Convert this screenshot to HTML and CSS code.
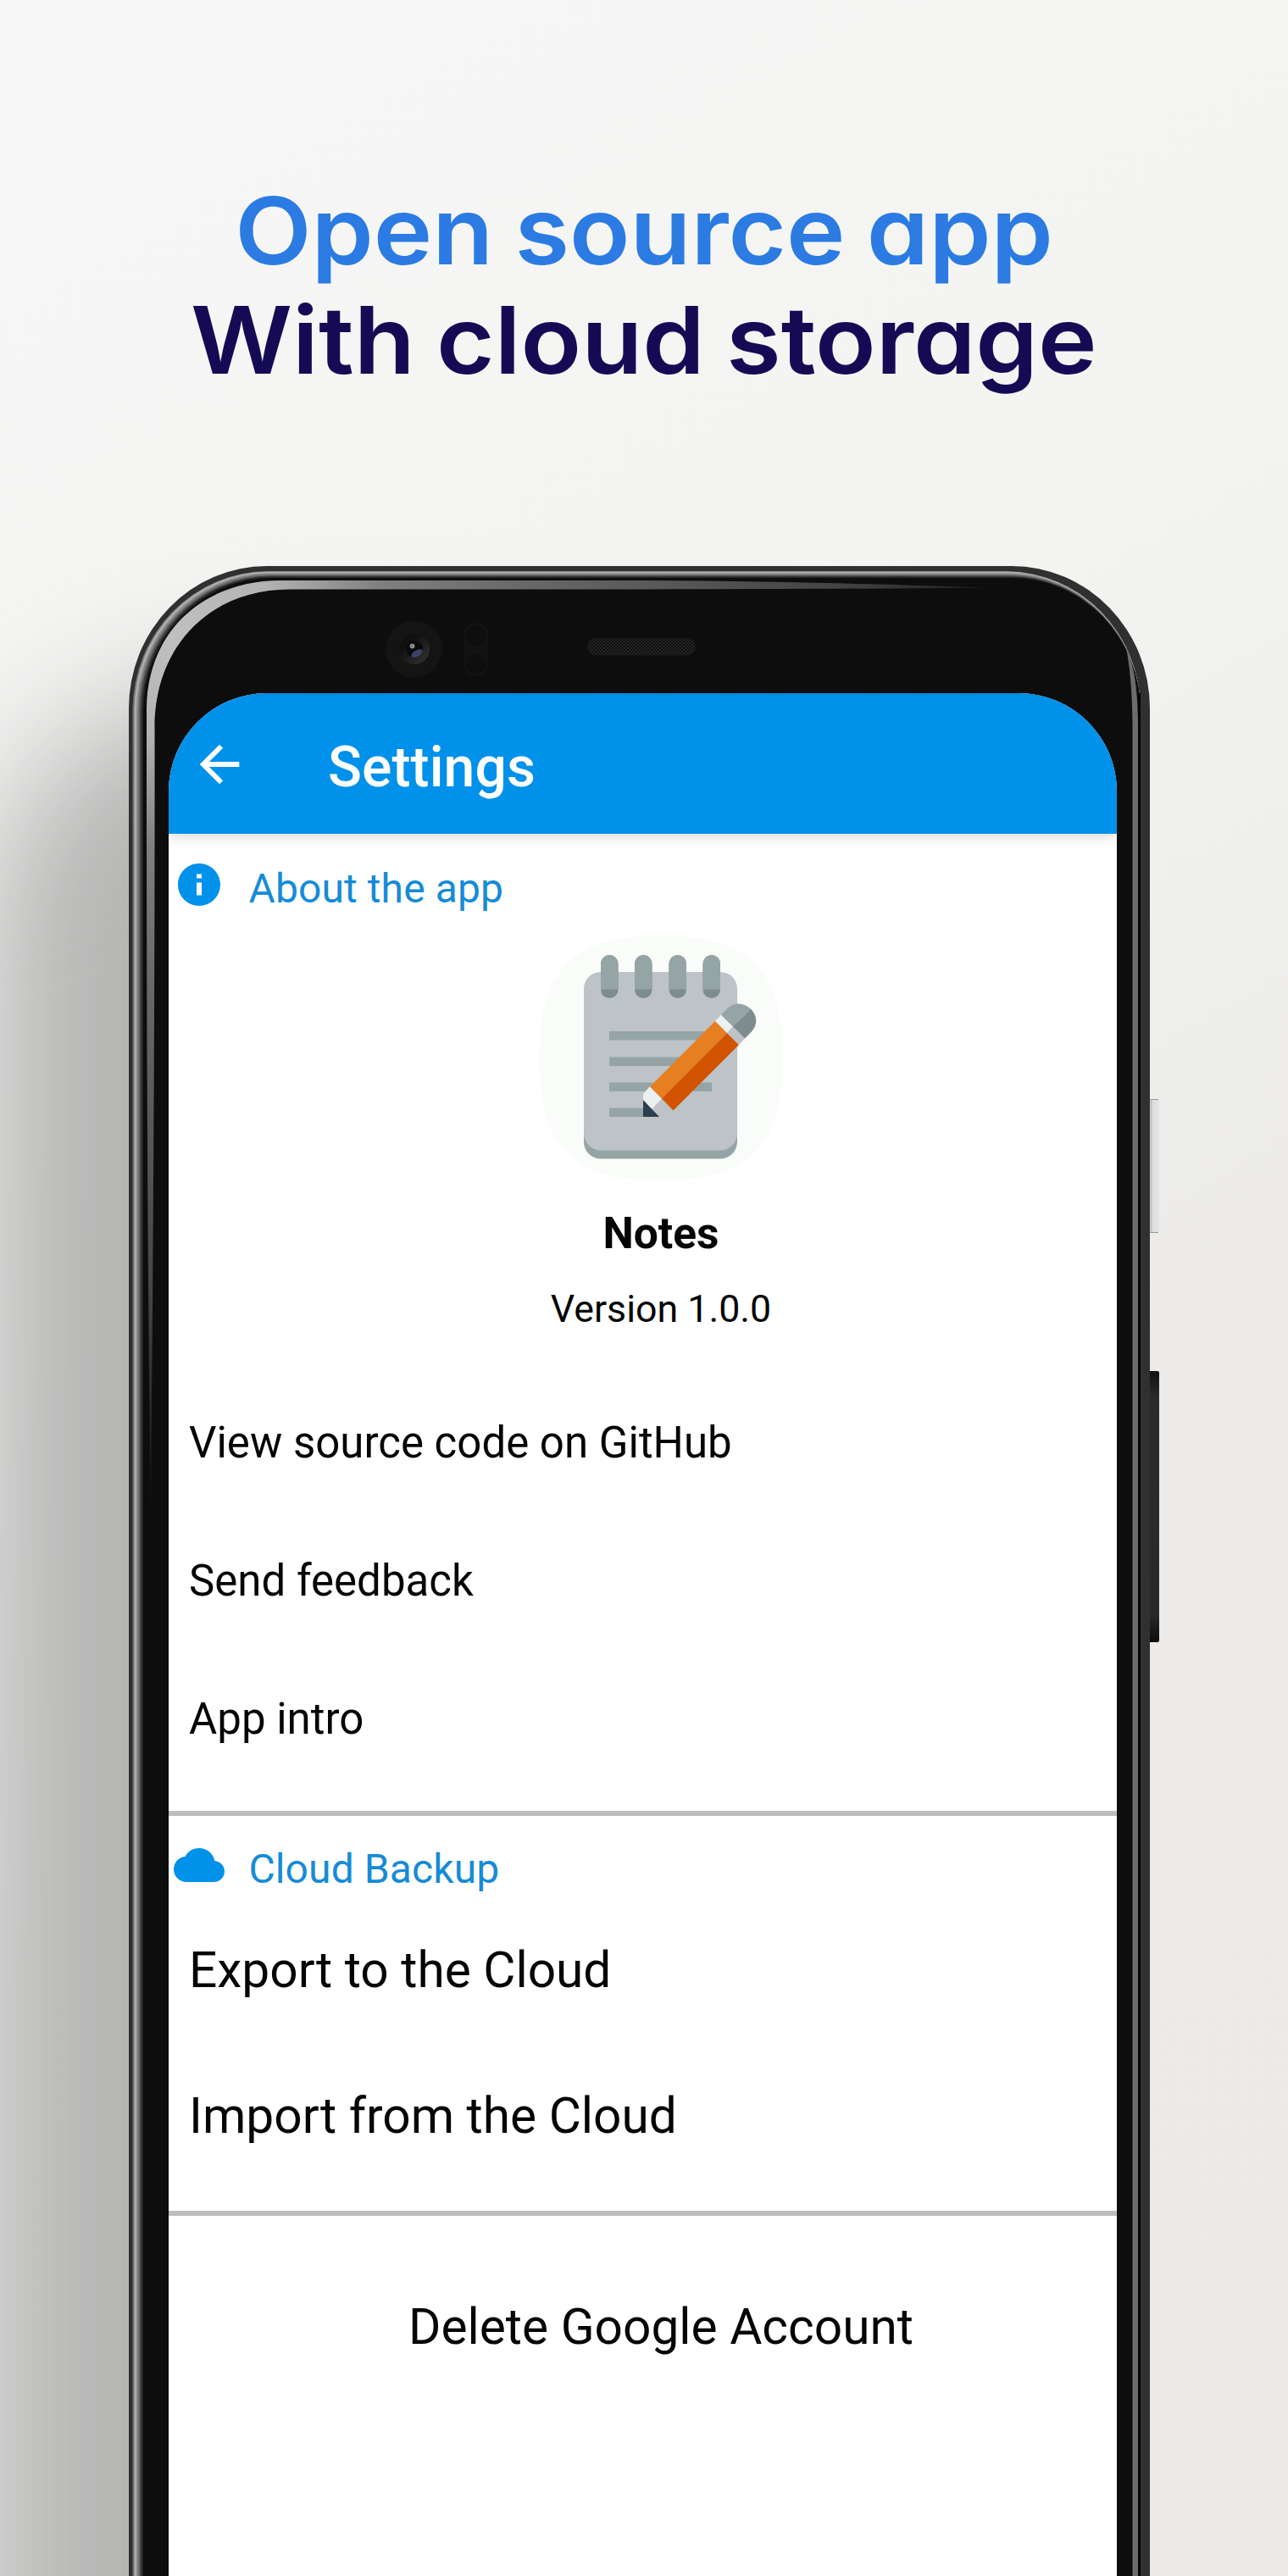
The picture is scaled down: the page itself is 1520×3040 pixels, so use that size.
FILE: index.html
```html
<!DOCTYPE html>
<html lang="en">
<head>
<meta charset="utf-8">
<title>Notes – Settings</title>
<link rel="stylesheet" href="styles.css">
</head>
<body>
<main class="poster">
  <h1 class="headline">
    <span class="headline-top">Open source app</span>
    <span class="headline-bottom">With cloud storage</span>
  </h1>
  <div class="phone">
    <div class="shadow"></div>
    <svg class="frame" width="1220" height="2400" viewBox="0 0 1220 2400" aria-hidden="true">
      <defs>
        <radialGradient id="shine" gradientUnits="userSpaceOnUse" cx="50" cy="80" r="1050">
          <stop offset="0" stop-color="#c0c0c0"/><stop offset=".12" stop-color="#b2b2b2"/>
          <stop offset=".24" stop-color="#808080"/><stop offset=".4" stop-color="#686868"/>
          <stop offset=".75" stop-color="#444"/><stop offset="1" stop-color="#0d0d0d"/>
        </radialGradient>
        <linearGradient id="power">
          <stop offset="0" stop-color="#8e8e8e"/><stop offset=".18" stop-color="#d2d2d2"/>
          <stop offset=".28" stop-color="#bdbdbd"/><stop offset=".4" stop-color="#dedede"/><stop offset="1" stop-color="#e4e4e4"/>
        </linearGradient>
        <linearGradient id="volume" x2="0" y2="1">
          <stop offset="0" stop-color="#111"/><stop offset=".1" stop-color="#2b2b2b"/>
          <stop offset=".9" stop-color="#292929"/><stop offset="1" stop-color="#0c0c0c"/>
        </linearGradient>
        <linearGradient id="ring" x1="0" y1="0" x2="1" y2="1">
          <stop offset=".3" stop-color="#101010"/><stop offset="1" stop-color="#353535"/>
        </linearGradient>
        <pattern id="mesh" width="4" height="4" patternUnits="userSpaceOnUse">
          <rect width="4" height="4" fill="#101010"/><rect width="2" height="2" fill="#242424"/><rect x="2" y="2" width="2" height="2" fill="#242424"/>
        </pattern>
        <clipPath id="lens"><circle cx="337" cy="98" r="10"/></clipPath>
      </defs>
      <rect x="1203" y="629" width="13" height="158" rx="2" fill="url(#power)"/>
      <path d="M1205 629.500h10M1205 786.500h10" stroke="#999"/>
      <rect x="1203" y="950" width="13" height="320" rx="2" fill="url(#volume)"/>
      <rect width="1205" height="2700" rx="163" ry="168" fill="#303030"/>
      <rect x="4.500" y="6" width="1189.500" height="2700" rx="160" ry="164" fill="#747474"/>
      <rect x="6.500" y="6.500" width="1187.500" height="2700" rx="158" ry="163" fill="#adadad"/>
      <rect x="9" y="8.500" width="1185" height="2700" rx="156" ry="162" fill="#8b8b8b"/>
      <rect x="11" y="10" width="1183" height="2700" rx="155" ry="161" fill="#696969"/>
      <rect x="13" y="11.500" width="1181" height="2700" rx="154" ry="160" fill="#454545"/>
      <rect x="15" y="12.500" width="1179" height="2700" rx="153" ry="159" fill="#262626"/>
      <rect x="17" y="14" width="1177" height="2700" rx="152" ry="158" fill="#0d0d0d"/>
      <path d="M26 1130C22 800 21 600 21 169C21 80 85 17 180 17H560C750 17 900 22 1015 25.500C850 27 700 27.500 560 27.500H190C95 27.500 30.500 95 30.500 190C31 520 28 900 26 1130Z" fill="url(#shine)"/>
      <path d="M1176 92C1188 120 1190.500 150 1191 185V2400H1184.500V185C1184 145 1181 115 1176 92Z" fill="#6c6c6c"/>
      <path d="M1192.500 150V2400" stroke="#050505" stroke-width="3"/>
      <rect x="46" y="149" width="1121" height="2600" rx="116" ry="116" fill="#0a0a0a"/>
      <circle cx="336.500" cy="98" r="33.500" fill="#141414"/>
      <circle cx="337" cy="98" r="18" fill="url(#ring)"/>
      <circle cx="337" cy="98" r="10" fill="#0a0a0d"/>
      <g clip-path="url(#lens)"><ellipse cx="341" cy="104" rx="8" ry="5" fill="#3b4264" transform="rotate(-25 341 104)"/></g>
      <circle cx="334.500" cy="94.500" r="3" fill="#858585"/>
      <rect x="395" y="67" width="29" height="63" rx="14.500" fill="#121212"/>
      <circle cx="409.500" cy="82" r="11.500" fill="#0e0e0e"/><circle cx="409.500" cy="116" r="11.500" fill="#0e0e0e"/>
      <rect x="541" y="85" width="128" height="20.500" rx="10.250" fill="url(#mesh)"/>
    </svg>
    <div class="screen">
      <header class="bar">
        <svg class="back" viewBox="0 0 24 24"><path fill="currentColor" d="M20 11H7.830l5.590-5.590L12 4l-8 8 8 8 1.410-1.410L7.830 13H20v-2z"/></svg>
        <span class="title">Settings</span>
      </header>
      <section class="content">
        <h2 class="section about-head">
          <svg class="icon info" viewBox="0 0 24 24"><path fill="currentColor" d="M12 2C6.480 2 2 6.480 2 12s4.480 10 10 10 10-4.480 10-10S17.520 2 12 2zm1.200 15h-2.400v-6h2.400v6zm0-8h-2.400V7h2.400v2z"/></svg>
          <span class="section-label">About the app</span>
        </h2>
        <div class="identity">
          <svg class="logo" viewBox="0 0 288 289" width="288" height="289">
            <path d="M144 0C248 0 288 40 288 144.500S248 289 144 289 0 249 0 144.500 40 0 144 0Z" fill="#fafcfa"/>
            <rect x="53" y="53" width="181" height="210.500" rx="20" fill="#95a5a5"/>
            <rect x="53" y="43" width="181" height="210.500" rx="20" fill="#bdc3c7"/>
            <path fill="#95a5a5" d="M83 113h121v10.500H83zM83 143.500h121V154H83zM83 173.500h121V184H83zM83 203.500h60V214H83z"/>
            <g fill="#7f8c8d"><rect x="73" y="23" width="20.500" height="51" rx="10.250"/><rect x="113" y="23" width="20.500" height="51" rx="10.250"/><rect x="153.500" y="23" width="20.500" height="51" rx="10.250"/><rect x="193.500" y="23" width="20.500" height="51" rx="10.250"/></g>
            <path fill="#95a5a5" d="M73 63.500V33.500a10.250 10.250 0 0 1 20.500 0v30zM113 63.500V33.500a10.250 10.250 0 0 1 20.500 0v30zM153.500 63.500V33.500a10.250 10.250 0 0 1 20.500 0v30zM193.500 63.500V33.500a10.250 10.250 0 0 1 20.500 0v30z"/>
            <path fill="#bdc3c7" d="M123 194H158V214H123z"/>
            <path fill="#ecf0f1" d="M123 195V187L131 178 145 192.500 133 205z"/>
            <path fill="#2c3e50" d="M123 194V214H142z"/>
            <path fill="#e67e22" d="M131 178.500 208 101 222 115 145 192.500z"/>
            <path fill="#d35400" d="M145 192.500 222 115 236 129 158.500 206.500z"/>
            <path fill="#ecf0f1" d="M208 101 215 93.500 229 107.500 222 115z"/>
            <path fill="#bdc3c7" d="M222 115 229 107.500 243 121.500 236 129z"/>
            <path fill="#95a5a5" d="M215 93.500 223 85.500Q236 75 250 86.500L229 107.500z"/>
            <path fill="#7f8c8d" d="M229 107.500 250 86.500Q262 100 251 113.500L243 121.500z"/>
          </svg>
          <div class="name">Notes</div>
          <div class="version">Version 1.0.0</div>
        </div>
        <ul class="list">
          <li>View source code on GitHub</li>
          <li>Send feedback</li>
          <li>App intro</li>
        </ul>
        <hr class="rule">
        <h2 class="section cloud-head">
          <svg class="icon cloud" viewBox="0 0 24 24"><path fill="currentColor" d="M19.350 10.040C18.670 6.590 15.640 4 12 4 9.110 4 6.600 5.640 5.350 8.040 2.340 8.360 0 10.910 0 14c0 3.310 2.690 6 6 6h13c2.760 0 5-2.240 5-5 0-2.640-2.050-4.780-4.650-4.960z"/></svg>
          <span class="section-label">Cloud Backup</span>
        </h2>
        <ul class="list large">
          <li>Export to the Cloud</li>
          <li>Import from the Cloud</li>
        </ul>
        <hr class="rule">
        <div class="delete">Delete Google Account</div>
      </section>
    </div>
  </div>
</main>
</body>
</html>
```
FILE: styles.css
```css
* { box-sizing: border-box; }
body { margin: 0; }
.poster {
  width: 1520px;
  height: 3040px;
  overflow: hidden;
  background: linear-gradient(150deg, #f7f7f7 0%, #f3f3f1 35%, #ecebea 60%, #ebeae9 100%);
  font-family: Roboto, "Noto Sans", sans-serif;
}
.headline {
  margin: 0;
  height: 668px;
  padding-top: 208px;
  display: flex;
  flex-direction: column;
  align-items: center;
  font-family: Inter, sans-serif;
  font-size: 110px;
  font-weight: 600;
  line-height: 129px;
  word-spacing: -4px;
  font-feature-settings: "cv11";
  white-space: nowrap;
}
/* widened glyphs for the display face */
.headline-top { color: #2b7be3; transform: scaleX(1.068); }
.headline-bottom { color: #150b55; transform: scaleX(1.07); }
.phone {
  position: relative;
  width: 1205px;
  height: 2372px;
  margin-left: 152px;
  padding: 150px 39px 0 47px;
}
.shadow {
  position: absolute;
  left: -165px;
  top: 155px;
  width: 1100px;
  height: 2600px;
  border-radius: 260px;
  background: #b5b5b4;
  filter: blur(80px);
}
.frame { position: absolute; left: 0; top: 0; }
.screen {
  position: relative;
  width: 1119px;
  height: 2222px;
  overflow: hidden;
  border-radius: 116px 116px 0 0;
  background: #fff;
}
.bar {
  position: relative;
  height: 166px;
  padding: 8px 0 0 25px;
  display: flex;
  align-items: center;
  color: #fff;
  background: linear-gradient(#0488dc, #0091eb 5px);
  box-shadow: 0 3px 14px rgba(0, 0, 30, .16);
}
.back { width: 70px; height: 70px; margin-top: -6px; margin-right: 93px; }
.title { font-size: 66px; font-weight: 500; letter-spacing: .1px; }
.content { width: 1162px; }
.section {
  margin: 0;
  padding-left: 6px;
  display: flex;
  align-items: center;
  font-size: 48px;
  font-weight: 400;
  color: #158bd8;
}
.icon { width: 60px; height: 60px; color: #0091eb; }
.section-label { margin-left: 28.500px; padding-top: 9px; letter-spacing: .1px; }
.about-head { height: 120px; }
.cloud-head { height: 96px; padding-top: 19px; }
.identity { display: flex; flex-direction: column; align-items: center; color: #050505; }
.name { font-size: 51.500px; font-weight: 700; line-height: 126px; }
.version { font-size: 44.700px; line-height: 52px; }
.list {
  margin: 50px 0 27px;
  padding: 0 0 0 24px;
  list-style: none;
  font-size: 51px;
  line-height: 163px;
  color: #050505;
}
.list.large { margin: 0 0 26px; font-size: 58.600px; line-height: 172px; }
.rule { margin: 0; border: 0; height: 6px; background: #bdbdbd; }
.delete { margin-top: 46px; text-align: center; font-size: 58.600px; line-height: 170px; color: #050505; }
```
